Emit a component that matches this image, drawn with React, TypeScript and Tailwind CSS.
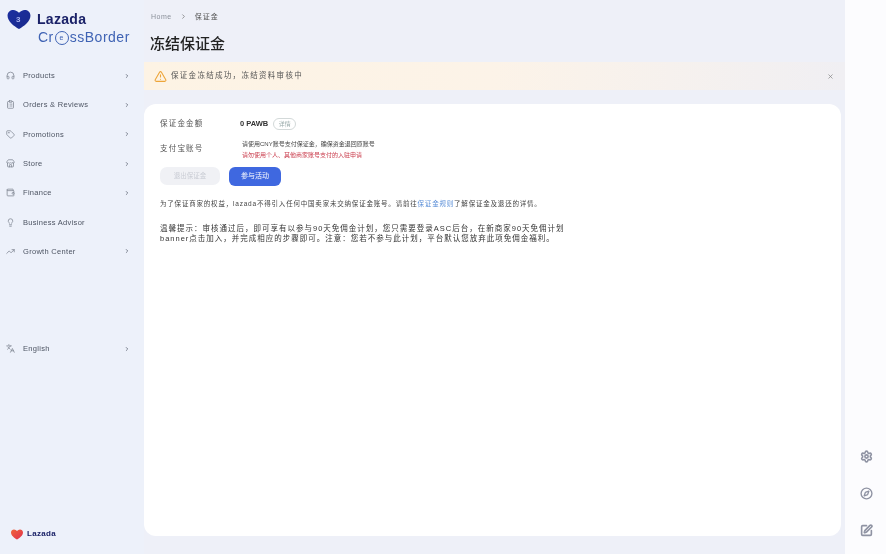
import React from "react";
import { ChevronRight, Headphones, ClipboardList, Tag, Store, Wallet, Lightbulb, TrendingUp, Languages, TriangleAlert, X, Settings, Compass, SquarePen } from "lucide-react";

const navItems = [
  { name: "Products", icon: <Headphones size={9} />, arrow: true },
  { name: "Orders & Reviews", icon: <ClipboardList size={9} />, arrow: true },
  { name: "Promotions", icon: <Tag size={9} />, arrow: true },
  { name: "Store", icon: <Store size={9} />, arrow: true },
  { name: "Finance", icon: <Wallet size={9} />, arrow: true },
  { name: "Business Advisor", icon: <Lightbulb size={9} />, arrow: false },
  { name: "Growth Center", icon: <TrendingUp size={9} />, arrow: true },
];

const NavRow = ({ name, icon, arrow }: { name: string; icon: React.ReactNode; arrow: boolean }) => (
  <div className="flex h-[29.3px] items-center pl-[6px] pr-[14px] text-[#5b6270]">
    <span className="flex w-[17px] justify-start text-[#7d8490]">{icon}</span>
    <span className="flex-1 text-[7.5px] tracking-[0.3px] text-[#4d5462]">{name}</span>
    {arrow && <ChevronRight size={6} strokeWidth={3} className="text-[#5b6270]" />}
  </div>
);

const Heart = ({ from, to, className }: { from: string; to: string; className: string }) => (
  <svg viewBox="0 0 26 22" className={className}>
    <defs>
      <linearGradient id={from.slice(1)} x1="0" y1="0" x2="1" y2="1">
        <stop offset="0" stopColor={from} />
        <stop offset="1" stopColor={to} />
      </linearGradient>
    </defs>
    <path
      d="M1 7C1 3 4 1 7 1c2.500 0 4.500 1.500 6 3 1.500-1.500 3.500-3 6-3 3 0 6 2 6 6 0 6-7 11-12 14C8 18 1 13 1 7z"
      fill={`url(#${from.slice(1)})`}
    />
  </svg>
);

export default function App() {
  return (
    <div
      className="flex h-[554px] w-[886px] overflow-hidden bg-[#eef0f8] text-[#333] blur-[0.3px]"
      style={{ fontFamily: '"Liberation Sans", "Noto Sans CJK SC", sans-serif' }}
    >
      {/* Sidebar */}
      <aside className="flex w-[144px] shrink-0 flex-col bg-[#edf1fa]">
        <div className="h-[61px] pl-[6px] pt-[9px]">
          <div className="flex items-center gap-[5px]">
            <div className="relative">
              <Heart from="#1c2fa0" to="#1a2a8c" className="h-[21px] w-[26px]" />
              <span className="absolute left-[10px] top-[5px] text-[8px] font-bold text-[#aab4f0]">3</span>
            </div>
            <span className="-mt-[2px] text-[14px] font-bold leading-none tracking-[0.3px] text-[#1b2268]">Lazada</span>
          </div>
          <div className="ml-[32px] flex items-center text-[14px] leading-[15px] tracking-[0.5px] text-[#3f63b4]">
            Cr
            <span className="mx-[1px] flex h-[14px] w-[14px] items-center justify-center rounded-full border border-[#3f63b4] text-[7px] leading-none">
              e
            </span>
            ssBorder
          </div>
        </div>

        <nav>
          {navItems.map((item) => (
            <NavRow key={item.name} {...item} />
          ))}
        </nav>

        <div className="mt-[68px]">
          <NavRow name="English" icon={<Languages size={9} />} arrow />
        </div>

        <div className="mt-auto flex items-center gap-[3px] pb-[14px] pl-[10px]">
          <Heart from="#f0653a" to="#e0304e" className="h-[11px] w-[14px]" />
          <span className="text-[8px] font-bold tracking-[0.3px] text-[#1b2268]">Lazada</span>
        </div>
      </aside>

      {/* Main */}
      <main className="flex w-[701px] shrink-0 flex-col">
        <div className="flex items-center gap-[8px] pl-[7px] pt-[12px] text-[7px] leading-[9px] text-[#8a8f99]">
          <span className="tracking-[0.5px]">Home</span>
          <ChevronRight size={7} className="text-[#555]" />
          <span className="tracking-[1px] text-[#555]">保证金</span>
        </div>
        <h1 className="pl-[6px] pt-[11px] text-[15px] font-medium leading-[24px] text-[#222]">冻结保证金</h1>

        <div className="mt-[6px] flex h-[28px] items-center bg-gradient-to-r from-[#fdf3e4] via-[#fcf3e8] to-[#f0eff3] pl-[10px] pr-[11px]">
          <TriangleAlert size={13} className="text-[#eda53a]" />
          <span className="ml-[4px] flex-1 text-[7.500px] tracking-[1.300px] text-[#555]">
            保证金冻结成功，冻结资料审核中
          </span>
          <X size={7} strokeWidth={2.5} className="text-[#888]" />
        </div>

        <section className="mt-[14px] h-[432px] w-[697px] rounded-[12px] bg-white pl-[16px] pt-[14px]">
          <div className="flex h-[12px] items-center">
            <span className="w-[80px] text-[7.500px] tracking-[1.200px] text-[#555]">保证金金额</span>
            <span className="text-[7.500px] font-bold text-[#333]">0 PAWB</span>
            <span className="ml-[5px] flex h-[12px] w-[23px] items-center justify-center rounded-full border border-[#d3d9d9] text-[6px] text-[#9aa]">
              详情
            </span>
          </div>

          <div className="mt-[9px] flex">
            <span className="w-[82px] pt-[4px] text-[7.500px] tracking-[1.200px] text-[#555]">支付宝账号</span>
            <div className="text-[6px] leading-[10.500px] text-[#444]">
              <p>请使用CNY账号支付保证金，确保资金退回原账号</p>
              <p className="text-[#c93a4a]">请勿使用个人、其他商家账号支付的入驻申请</p>
            </div>
          </div>

          <div className="mt-[7px] flex gap-[9px]">
            <button className="h-[18px] w-[60px] rounded-[7px] bg-[#f0f1f5] text-[6.500px] text-[#c9ccd4]">退出保证金</button>
            <button className="h-[19px] w-[52px] rounded-[6px] bg-[#3f68e0] text-[7px] text-white">参与活动</button>
          </div>

          <p className="mt-[13px] text-[6.500px] leading-[10px] tracking-[0.8px] text-[#444]">
            为了保证商家的权益，lazada不得引入任何中国卖家未交纳保证金账号。请前往
            <span className="text-[#5b8fd8]">保证金规则</span>
            了解保证金及退还的详情。
          </p>

          <div className="mt-[15px] w-[450px] text-[7.500px] leading-[9.500px] tracking-[1px] text-[#333]">
            <p>温馨提示：审核通过后，即可享有以参与90天免佣金计划，您只需要登录ASC后台，在新商家90天免佣计划</p>
            <p>banner点击加入，并完成相应的步骤即可。注意：您若不参与此计划，平台默认您放弃此项免佣金福利。</p>
          </div>
        </section>
      </main>

      {/* Right rail */}
      <aside className="flex flex-1 flex-col items-center justify-end gap-[24px] bg-[#fcfcfe] pb-[17px] text-[#8f93a3]">
        <Settings size={13} strokeWidth={3} className="ml-[2px]" />
        <Compass size={13} strokeWidth={2.5} className="ml-[2px]" />
        <SquarePen size={13} strokeWidth={3} className="ml-[2px]" />
      </aside>
    </div>
  );
}
